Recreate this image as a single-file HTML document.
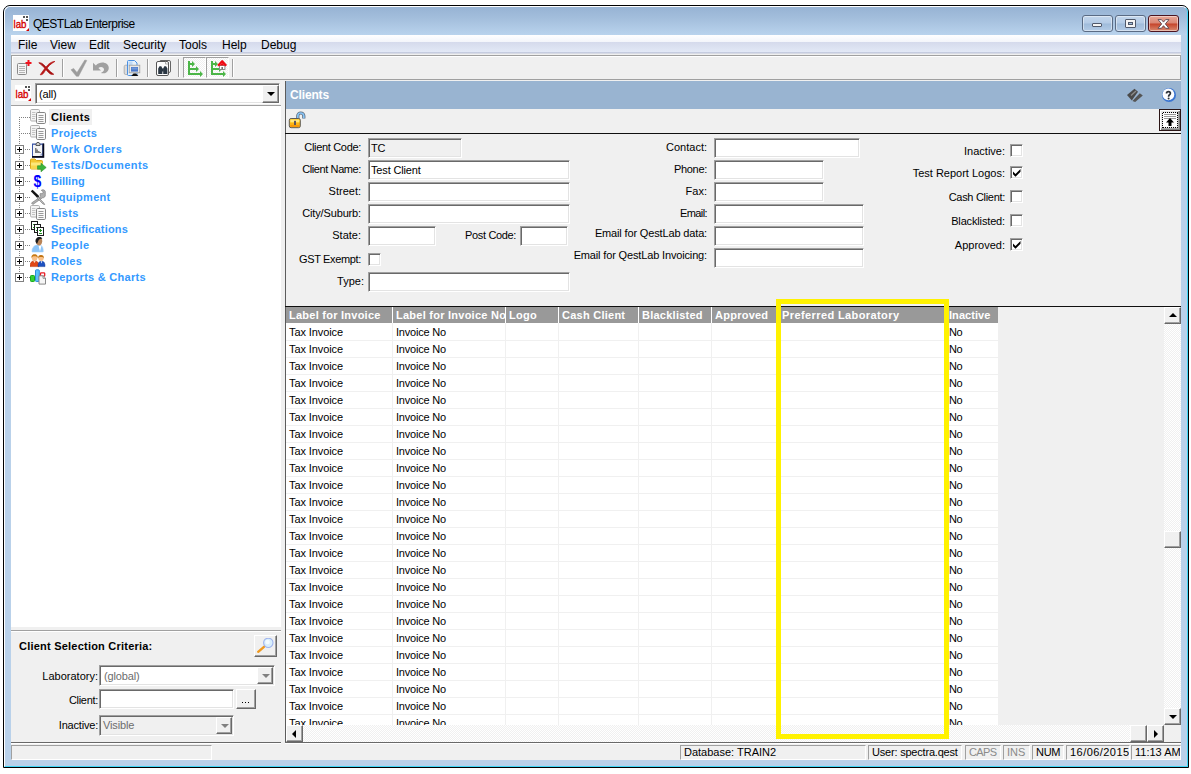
<!DOCTYPE html>
<html>
<head>
<meta charset="utf-8">
<title>QESTLab Enterprise</title>
<style>
*{box-sizing:border-box;margin:0;padding:0}
html,body{width:1191px;height:774px;overflow:hidden;background:#fff}
body{position:relative;font-family:"Liberation Sans",sans-serif;font-size:11px;color:#000}
.a{position:absolute}
#win{left:3px;top:5px;width:1186px;height:763px;background:#b9d1ea;border:1px solid #000;border-radius:7px 7px 0 0;overflow:hidden}
#win .cy{left:0;top:0;right:0;bottom:0;border:1px solid #3fd6f6;border-top-color:#fff;border-left-color:#fff;border-radius:6px 6px 0 0}
#tgrad{left:1px;top:1px;right:1px;height:28px;background:linear-gradient(#97b3d4,#a3bedc 40%,#b9d3ed)}
#client{left:11px;top:35px;width:1170px;height:725px;background:#f0f0f0}
#title{left:33px;top:16px;font-size:12px;line-height:16px;color:#000;white-space:nowrap;letter-spacing:-.5px}
.wb{top:15px;width:31px;height:17px;border:1px solid #5a6b84;border-radius:3px;background:linear-gradient(#c3d6ec 0,#b4cbe6 48%,#9fbbda 52%,#b3cbe6 100%);box-shadow:inset 0 0 0 1px rgba(255,255,255,.45)}
#menubar{left:11px;top:35px;width:1170px;height:19px;background:linear-gradient(#ffffff 0,#f3f5fb 36%,#d5daec 38%,#e2e8f6 88%,#b9c0d6 94%,#f0f0f0 100%)}
.mi{top:37px;font-size:12px;line-height:16px;white-space:nowrap}
#toolbar{left:11px;top:55px;width:1170px;height:25px;border:1px solid #a0a0a0;box-shadow:inset 1px 1px 0 #fff;background:#f0f0f0}
.sep{top:59px;width:2px;height:18px;border-left:1px solid #a0a0a0;border-right:1px solid #fff}
.lbl{white-space:nowrap;line-height:13px;font-size:11px;text-align:right}
.tb{background:#fff;border:1px solid;border-color:#a0a0a0 #fff #fff #a0a0a0;box-shadow:inset 1px 1px 0 #696969, inset -1px -1px 0 #e3e3e3;font-size:11px;line-height:14px;padding:2px 0 0 2px;white-space:nowrap;overflow:hidden;letter-spacing:-.15px}
.cb{width:13px;height:13px;background:#fff;border:1px solid;border-color:#a0a0a0 #fff #fff #a0a0a0;box-shadow:inset 1px 1px 0 #696969, inset -1px -1px 0 #e3e3e3}
.btn{background:#f0f0f0;border:1px solid;border-color:#fff #696969 #696969 #fff;box-shadow:inset -1px -1px 0 #a0a0a0, inset 1px 1px 0 #f0f0f0}
.dith{background-color:#f0f0f0;background-image:conic-gradient(#fff 25%,#f0f0f0 0 50%,#fff 0 75%,#f0f0f0 0);background-size:2px 2px}
.tr{left:51px;font-weight:bold;font-size:11px;line-height:13px;color:#3399ff;white-space:nowrap;letter-spacing:.45px;margin-top:1px}
.hd{top:307px;height:16px;background:#999;color:#fff;font-weight:bold;font-size:11px;line-height:17px;padding-left:3px;white-space:nowrap;overflow:hidden;letter-spacing:.25px}
.sbp{top:745px;height:15px;border:1px solid;border-color:#a0a0a0 #fff #fff #a0a0a0;font-size:11px;line-height:13px;padding-left:3px;white-space:nowrap;overflow:hidden}
.gt{font-size:11px;line-height:13px;white-space:nowrap}
</style>
</head>
<body>
<!-- window frame -->
<div id="win" class="a"><div id="tgrad" class="a"></div><div class="a cy"></div></div>
<div id="client" class="a"></div>
<!-- app icon -->
<svg class="a" style="left:13px;top:15px" width="16" height="16" viewBox="0 0 16 16"><rect width="16" height="16" fill="#fff"/><text x="0.500" y="12.500" font-family="Liberation Sans" font-size="11" fill="#d40000" stroke="#d40000" stroke-width=".35" textLength="13" lengthAdjust="spacingAndGlyphs">lab</text><rect x="10" y="1" width="2" height="2" fill="#555"/><rect x="13" y="1" width="2" height="2" fill="#555"/><rect x="13" y="4" width="2" height="2" fill="#555"/><path d="M16 13v3h-3z" fill="#d40000"/></svg>
<div id="title" class="a">QESTLab Enterprise</div>
<!-- caption buttons -->
<div class="a wb" style="left:1082px"><div class="a" style="left:9px;top:7px;width:10px;height:4px;background:#f4f4f4;border:1px solid #50596b;border-radius:1px"></div></div>
<div class="a wb" style="left:1115px"><div class="a" style="left:9px;top:3px;width:11px;height:9px;background:#f4f4f4;border:1px solid #50596b;border-radius:1px"><div class="a" style="left:2px;top:2px;width:5px;height:3px;background:#9fbbda;border:1px solid #50596b"></div></div></div>
<div class="a wb" style="left:1148px;border-color:#4b1420;background:linear-gradient(#e8a696 0,#d98573 48%,#c5432a 52%,#d98a6f 100%)"><svg class="a" style="left:8px;top:3px" width="13" height="10" viewBox="0 0 13 10"><path d="M1 .6h3.400L6.500 3.100 8.600 .6H12L8.300 4.900 12 9.300H8.600L6.500 6.700 4.400 9.300H1L4.700 4.900z" fill="#fff" stroke="#5a4650" stroke-width=".9"/></svg></div>
<!-- menu bar -->
<div id="menubar" class="a"></div>
<div class="a mi" style="left:18px">File</div>
<div class="a mi" style="left:50px">View</div>
<div class="a mi" style="left:89px">Edit</div>
<div class="a mi" style="left:123px">Security</div>
<div class="a mi" style="left:179px">Tools</div>
<div class="a mi" style="left:222px">Help</div>
<div class="a mi" style="left:261px">Debug</div>
<!-- toolbar -->
<div id="toolbar" class="a"></div>
<!-- toolbar icons -->
<svg class="a" style="left:16px;top:59px" width="18" height="18" viewBox="0 0 18 18"><rect x="1.5" y="4.500" width="9" height="11" rx="1" fill="#f4f4f4" stroke="#8a8a8a"/><path d="M3 7.500h6M3 9.500h6M3 11.500h6M3 13.500h6" stroke="#b4b4b4"/><path d="M12.500 1v6M9.500 4h6" stroke="#f0141e" stroke-width="2"/></svg>
<svg class="a" style="left:38px;top:60px" width="18" height="16" viewBox="0 0 18 16"><path d="M.8 2.800C2.500 2.500 4 3.200 5.500 4.600C8.500 7.500 11.500 11.500 15.800 14.300C13.500 14.800 12 14 10.500 12.500C7.500 9.500 5 5.500 .8 2.800z" fill="#a81010" stroke="#a81010" stroke-width=".7"/><path d="M17 1.400C14 1.600 11.500 3 9.500 5.300C7 8 4.500 11.500 2.200 14.800C3.800 14.900 4.800 14.200 5.700 13C8 9.500 11 4.500 17 1.400z" fill="#b81818" stroke="#b81818" stroke-width=".7"/></svg>
<div class="a sep" style="left:62px"></div>
<svg class="a" style="left:70px;top:59px" width="18" height="18" viewBox="0 0 18 18"><path d="M1 10.800L3.600 9.400L7 13.600L14.800 1L16.800 1.400L8.600 17.300H6.400z" fill="#9c9c9c" stroke="#9c9c9c" stroke-width=".5"/></svg>
<svg class="a" style="left:92px;top:60px" width="18" height="16" viewBox="0 0 18 16"><path d="M1 2.800V10.500H9L6.400 8C8.500 6.400 12 7 12 9.600C12 11 11 12 9.400 12.400V13.200H13C15.500 12.200 16.800 10.200 16.800 8C16.800 2.800 9 .2 3.800 5.400z" fill="#a0a0a0"/></svg>
<div class="a sep" style="left:116px"></div>
<svg class="a" style="left:123px;top:59px" width="18" height="18" viewBox="0 0 18 18"><rect x="1.200" y="6.200" width="5" height="9.300" rx="1.500" fill="#dcdcdc" stroke="#a4a4a4" stroke-width=".8"/><path d="M5.500 1.500h6l2.500 2.500v12.500h-8.500q-1 0-1-1v-13q0-1 1-1z" fill="#e6f1fc" stroke="#4a90e2"/><path d="M5.500 2.500h4v4.500h-4z" fill="#c0daf6"/><rect x="6.200" y="6.200" width="10.600" height="7.600" fill="#e8e8e8" stroke="#9c9c9c" stroke-width=".8"/><rect x="8" y="8" width="7" height="4.600" fill="#4a78c8"/><rect x="8.500" y="8.500" width="6" height="2" fill="#7098da"/><path d="M8.200 16.900l2.300-2.400h2.500l2.400 2.400z" fill="#111"/></svg>
<div class="a sep" style="left:147px"></div>
<svg class="a" style="left:155px;top:59px" width="18" height="18" viewBox="0 0 18 18"><rect x="4.500" y="1.500" width="11" height="12" rx="1.500" fill="#fafafa" stroke="#666"/><rect x="1.500" y="2.500" width="12" height="14" rx="1.500" fill="#fdfdfd" stroke="#555"/><path d="M10.500 2.500v2.500h3" fill="none" stroke="#999" stroke-width=".8"/><path d="M3.200 15v-5.500l1.300-2.200h1.800l1.100 2.200V15zM8.200 15v-5.500l1.100-2.200h1.800l1.300 2.200V15z" fill="#2a3642"/><rect x="7" y="9.500" width="1.700" height="3" fill="#2a3642"/></svg>
<div class="a sep" style="left:178px"></div>
<div class="a dith" style="left:183px;top:57px;width:23px;height:21px;border:1px solid;border-color:#a0a0a0 #fff #fff #a0a0a0"></div>
<div class="a dith" style="left:206px;top:57px;width:23px;height:21px;border:1px solid;border-color:#a0a0a0 #fff #fff #a0a0a0"></div>
<svg class="a" style="left:187px;top:60px" width="18" height="18" viewBox="0 0 18 18"><path d="M1 1h2v12h10v-2l3 3-3 3v-2H1zM3 3h2V1l3 3-3 3V5H3zM3 8h6V6l3 3-3 3v-2H3z" fill="#4cb648"/></svg>
<svg class="a" style="left:210px;top:60px" width="18" height="18" viewBox="0 0 18 18"><path d="M1 1h2v12h10v-2l3 3-3 3v-2H1zM3 3h2V1l3 3-3 3V5H3zM3 8h6V6l3 3-3 3v-2H3z" fill="#4cb648"/><rect x="9.500" y="5.500" width="5.400" height="4" fill="#fff" stroke="#8a8a8a"/><rect x="11.400" y="7" width="1.600" height="2.400" fill="#777"/><path d="M8 5.800L12.200 1.200 16.200 5.800" stroke="#f00a14" stroke-width="2.200" fill="none" stroke-linejoin="round"/><path d="M9.500 5.500l2.700-2.800 2.600 2.800z" fill="#f00a14"/></svg>
<div class="a sep" style="left:232px"></div>
<!-- left pane -->
<svg class="a" style="left:15px;top:85px" width="16" height="16" viewBox="0 0 16 16"><rect width="16" height="16" fill="#fff"/><text x="0.500" y="12.500" font-family="Liberation Sans" font-size="11" fill="#d40000" stroke="#d40000" stroke-width=".35" textLength="13" lengthAdjust="spacingAndGlyphs">lab</text><rect x="10" y="1" width="2" height="2" fill="#555"/><rect x="13" y="1" width="2" height="2" fill="#555"/><rect x="13" y="4" width="2" height="2" fill="#555"/><path d="M16 13v3h-3z" fill="#d40000"/></svg>
<div class="a tb" style="left:35px;top:83px;width:245px;height:21px;padding:3px 0 0 3px">(all)</div>
<div class="a btn" style="left:262px;top:85px;width:17px;height:18px"><div class="a" style="left:4px;top:6px;border:4px solid transparent;border-top:4px solid #000;border-bottom:0;width:0;height:0"></div></div>
<div class="a" style="left:11px;top:105px;width:270px;height:522px;background:#fff;border-top:1px solid #a0a0a0"></div>
<div class="a" style="left:19px;top:117px;width:1px;height:161px;background:repeating-linear-gradient(#808080 0 1px,transparent 1px 2px)"></div>
<div class="a" style="left:19px;top:117px;width:11px;height:1px;background:repeating-linear-gradient(90deg,#808080 0 1px,transparent 1px 2px)"></div>
<svg class="a" style="left:30px;top:109px" width="17" height="17" viewBox="0 0 17 17"><rect x=".5" y=".5" width="9" height="11.500" rx="1.200" fill="#f4f4f4" stroke="#b0b0b0"/><path d="M2 3.500h3.500M2 5.500h3.500M2 7.500h3.500M2 9.500h3" stroke="#c4c4c4"/><rect x="6.500" y="3.500" width="9" height="11" rx="1.200" fill="#fafafa" stroke="#858585"/><path d="M8.500 6.500h5M8.500 8.500h5M8.500 10.500h5M8.500 12.500h5" stroke="#9a9a9a"/></svg>
<div class="a" style="left:49px;top:109px;width:43px;height:16px;background:#f0f0f0"></div>
<div class="a tr" style="top:110px;color:#000;letter-spacing:0.35px">Clients</div>
<div class="a" style="left:19px;top:133px;width:11px;height:1px;background:repeating-linear-gradient(90deg,#808080 0 1px,transparent 1px 2px)"></div>
<svg class="a" style="left:30px;top:125px" width="17" height="17" viewBox="0 0 17 17"><rect x=".5" y=".5" width="9" height="11.500" rx="1.200" fill="#f4f4f4" stroke="#b0b0b0"/><path d="M2 3.500h3.500M2 5.500h3.500M2 7.500h3.500M2 9.500h3" stroke="#c4c4c4"/><rect x="6.500" y="3.500" width="9" height="11" rx="1.200" fill="#fafafa" stroke="#858585"/><path d="M8.500 6.500h5M8.500 8.500h5M8.500 10.500h5M8.500 12.500h5" stroke="#9a9a9a"/></svg>
<div class="a tr" style="top:126px;letter-spacing:0.35px">Projects</div>
<div class="a" style="left:25px;top:149px;width:5px;height:1px;background:repeating-linear-gradient(90deg,#808080 0 1px,transparent 1px 2px)"></div>
<div class="a" style="left:15px;top:145px;width:9px;height:9px;background:#fff;border:1px solid #808080"><div class="a" style="left:1px;top:3px;width:5px;height:1px;background:#000"></div><div class="a" style="left:3px;top:1px;width:1px;height:5px;background:#000"></div></div>
<svg class="a" style="left:30px;top:141px" width="17" height="17" viewBox="0 0 17 17"><rect x="2" y="2.500" width="12" height="14" fill="#3a55a8"/><rect x="3" y="3.800" width="9.200" height="11.200" fill="#f4f4f4"/><path d="M13.400 2.500V15.800H2" stroke="#080818" stroke-width="1.700" fill="none"/><path d="M12 14.500l-2.500 0 2.500-2.500z" fill="#9aa8d0"/><path d="M6 4.500V3l1-1.500h2L10 3v1.500z" fill="#cfcfcf" stroke="#3a3a3a" stroke-width=".8"/><path d="M5 12V7h1.500v1.500H8V10h1.500v1h1.500v1z" fill="#7c7c7c"/></svg>
<div class="a tr" style="top:142px;letter-spacing:0.45px">Work Orders</div>
<div class="a" style="left:25px;top:165px;width:5px;height:1px;background:repeating-linear-gradient(90deg,#808080 0 1px,transparent 1px 2px)"></div>
<div class="a" style="left:15px;top:161px;width:9px;height:9px;background:#fff;border:1px solid #808080"><div class="a" style="left:1px;top:3px;width:5px;height:1px;background:#000"></div><div class="a" style="left:3px;top:1px;width:1px;height:5px;background:#000"></div></div>
<svg class="a" style="left:30px;top:157px" width="17" height="17" viewBox="0 0 17 17"><path d="M.5 3q0-1 1-1h3.500l1.500 1.500h5q1 0 1 1V11q0 1-1 1h-10q-1 0-1-1z" fill="#f4c832" stroke="#dca81a"/><path d="M1 5.500h11.500v6H1z" fill="#fde87a"/><path d="M1 8.500h11.500v3H1z" fill="#f8d84c"/><path d="M7.500 8.800H11V6.200l5.200 4.300L11 14.800v-2.600H7.500z" fill="#3cb43c" stroke="#2a8e2a" stroke-width=".6"/></svg>
<div class="a tr" style="top:158px;letter-spacing:0.45px">Tests/Documents</div>
<div class="a" style="left:25px;top:181px;width:5px;height:1px;background:repeating-linear-gradient(90deg,#808080 0 1px,transparent 1px 2px)"></div>
<div class="a" style="left:15px;top:177px;width:9px;height:9px;background:#fff;border:1px solid #808080"><div class="a" style="left:1px;top:3px;width:5px;height:1px;background:#000"></div><div class="a" style="left:3px;top:1px;width:1px;height:5px;background:#000"></div></div>
<svg class="a" style="left:30px;top:173px" width="17" height="17" viewBox="0 0 17 17"><text x="3.600" y="11.800" transform="scale(1,1.200)" font-family="Liberation Sans" font-weight="bold" font-size="14" fill="#0000ff">$</text></svg>
<div class="a tr" style="top:174px;letter-spacing:0px">Billing</div>
<div class="a" style="left:25px;top:197px;width:5px;height:1px;background:repeating-linear-gradient(90deg,#808080 0 1px,transparent 1px 2px)"></div>
<div class="a" style="left:15px;top:193px;width:9px;height:9px;background:#fff;border:1px solid #808080"><div class="a" style="left:1px;top:3px;width:5px;height:1px;background:#000"></div><div class="a" style="left:3px;top:1px;width:1px;height:5px;background:#000"></div></div>
<svg class="a" style="left:30px;top:189px" width="17" height="17" viewBox="0 0 17 17"><path d="M15.300 2.500c-.3-1.500-2.500-2.300-4-1.200l2 1.600-.8 1.800-2.200-.2C9.700 6 10.200 7 11 7.500L1.500 14l1.300 1.500L12.500 8.800c1.800.2 3.200-1.500 2.800-3.300z" fill="#b0b0b0" stroke="#707070" stroke-width=".6"/><path d="M.8 2.300L2.600.8 9.400 7.300 7.600 9.200z" fill="#141414"/><path d="M8 7.800l5.800 6.200 .9 1.600-1.800-.7L7 8.800z" fill="#c4c4c4" stroke="#6c6c6c" stroke-width=".6"/></svg>
<div class="a tr" style="top:190px;letter-spacing:0.3px">Equipment</div>
<div class="a" style="left:25px;top:213px;width:5px;height:1px;background:repeating-linear-gradient(90deg,#808080 0 1px,transparent 1px 2px)"></div>
<div class="a" style="left:15px;top:209px;width:9px;height:9px;background:#fff;border:1px solid #808080"><div class="a" style="left:1px;top:3px;width:5px;height:1px;background:#000"></div><div class="a" style="left:3px;top:1px;width:1px;height:5px;background:#000"></div></div>
<svg class="a" style="left:30px;top:205px" width="17" height="17" viewBox="0 0 17 17"><rect x=".5" y=".5" width="9" height="11.500" rx="1.200" fill="#f4f4f4" stroke="#b0b0b0"/><path d="M2 3.500h3.500M2 5.500h3.500M2 7.500h3.500M2 9.500h3" stroke="#c4c4c4"/><rect x="6.500" y="3.500" width="9" height="11" rx="1.200" fill="#fafafa" stroke="#858585"/><path d="M8.500 6.500h5M8.500 8.500h5M8.500 10.500h5M8.500 12.500h5" stroke="#9a9a9a"/></svg>
<div class="a tr" style="top:206px;letter-spacing:0.45px">Lists</div>
<div class="a" style="left:25px;top:229px;width:5px;height:1px;background:repeating-linear-gradient(90deg,#808080 0 1px,transparent 1px 2px)"></div>
<div class="a" style="left:15px;top:225px;width:9px;height:9px;background:#fff;border:1px solid #808080"><div class="a" style="left:1px;top:3px;width:5px;height:1px;background:#000"></div><div class="a" style="left:3px;top:1px;width:1px;height:5px;background:#000"></div></div>
<svg class="a" style="left:30px;top:221px" width="17" height="17" viewBox="0 0 17 17"><g shape-rendering="crispEdges"><rect x="1.500" y=".5" width="6" height="8" fill="#fff" stroke="#1c1c1c"/><path d="M3 3.500h2M3 6.500h2" stroke="#2a9a2a"/><rect x="4.500" y="3.500" width="6" height="8" fill="#fff" stroke="#1c1c1c"/><path d="M6 6.500h2M6 9.500h2" stroke="#2a9a2a"/><rect x="7.500" y="6.500" width="6" height="8" fill="#fff" stroke="#1c1c1c"/><path d="M9 9.500h3M10.500 8v3M9 12.500h3" stroke="#1e8e1e"/></g></svg>
<div class="a tr" style="top:222px;letter-spacing:0.17px">Specifications</div>
<div class="a" style="left:25px;top:245px;width:5px;height:1px;background:repeating-linear-gradient(90deg,#808080 0 1px,transparent 1px 2px)"></div>
<div class="a" style="left:15px;top:241px;width:9px;height:9px;background:#fff;border:1px solid #808080"><div class="a" style="left:1px;top:3px;width:5px;height:1px;background:#000"></div><div class="a" style="left:3px;top:1px;width:1px;height:5px;background:#000"></div></div>
<svg class="a" style="left:30px;top:237px" width="17" height="17" viewBox="0 0 17 17"><path d="M2 15c-.3-3.500 1.500-6.500 5-7h3c2.500.5 3.500 3.500 3.200 7z" fill="#8cc4f8" stroke="#a8d4fa" stroke-width=".6"/><path d="M8.500 8.500l1.500 6 1.500-6z" fill="#fff"/><path d="M6 4.500C6 1.500 8 .3 9.500 .3 11.500 .3 12.300 2 12.200 4.500 12 7 10.500 8.500 9.300 8.500 7.500 8.500 6 7 6 4.500z" fill="#b88458"/><path d="M5.600 5C5 2 7 0 9.500 0c1.500 0 2.500.6 2.800 1.800-2-.3-3.200.4-3.800 1.800C8 5 7.500 6 7 7z" fill="#1c1c1c"/></svg>
<div class="a tr" style="top:238px;letter-spacing:0.4px">People</div>
<div class="a" style="left:25px;top:261px;width:5px;height:1px;background:repeating-linear-gradient(90deg,#808080 0 1px,transparent 1px 2px)"></div>
<div class="a" style="left:15px;top:257px;width:9px;height:9px;background:#fff;border:1px solid #808080"><div class="a" style="left:1px;top:3px;width:5px;height:1px;background:#000"></div><div class="a" style="left:3px;top:1px;width:1px;height:5px;background:#000"></div></div>
<svg class="a" style="left:30px;top:253px" width="17" height="17" viewBox="0 0 17 17"><path d="M0 13.600c-.2-3.500 1.500-5.800 4.500-5.800s4.700 2.300 4.500 5.800z" fill="#e04818" stroke="#b43408" stroke-width=".5"/><path d="M3.300 8l1.200 2 1.200-2z" fill="#f4e0d0"/><circle cx="4.600" cy="4.800" r="2.900" fill="#f8c088"/><path d="M1.500 5C1 2.500 2.500 1.200 4.600 1.200S8.200 2.500 7.700 5C7 3.500 6 3 4.600 3.200 3.200 3 2.200 3.500 1.500 5z" fill="#c87a14"/><path d="M8 13.600c-.2-3.200 1-5.600 3.500-5.600s3.700 2.400 3.500 5.600z" fill="#1c50c0" stroke="#103890" stroke-width=".5"/><path d="M10.600 8.200l.9 2.400.9-2.400z" fill="#e8f0ff"/><circle cx="11" cy="5.200" r="2.600" fill="#f8c088"/><path d="M8.200 5.500C7.800 3 9.200 2 11 2s3.200 1 2.800 3.500C13.200 4.200 12.300 3.800 11 4 9.700 3.800 8.800 4.200 8.200 5.500z" fill="#c07210"/></svg>
<div class="a tr" style="top:254px;letter-spacing:0.2px">Roles</div>
<div class="a" style="left:25px;top:277px;width:5px;height:1px;background:repeating-linear-gradient(90deg,#808080 0 1px,transparent 1px 2px)"></div>
<div class="a" style="left:15px;top:273px;width:9px;height:9px;background:#fff;border:1px solid #808080"><div class="a" style="left:1px;top:3px;width:5px;height:1px;background:#000"></div><div class="a" style="left:3px;top:1px;width:1px;height:5px;background:#000"></div></div>
<svg class="a" style="left:30px;top:269px" width="17" height="17" viewBox="0 0 17 17"><rect x=".5" y="6.500" width="4" height="6" rx=".8" fill="#34d034" stroke="#18a818"/><rect x="5.500" y=".8" width="3.800" height="11.700" rx=".8" fill="#5cc0fa" stroke="#2c8ce0"/><rect x="10.500" y="3.800" width="4.200" height="3.500" rx=".8" fill="#fff" stroke="#e81c24" stroke-width="1.300"/><path d="M9 6.800h4.200l2.300 2.300v6H9z" fill="#f6f6f6" stroke="#7c7c7c" stroke-width=".9"/><path d="M13 6.800v2.500h2.500" fill="none" stroke="#7c7c7c" stroke-width=".8"/></svg>
<div class="a tr" style="top:270px;letter-spacing:0.27px">Reports &amp; Charts</div>
<div class="a" style="left:11px;top:630px;width:270px;height:1px;background:#a0a0a0"></div>
<div class="a" style="left:11px;top:631px;width:270px;height:1px;background:#fff"></div>
<div class="a" style="left:19px;top:639px;font-weight:bold;font-size:11px;line-height:14px;white-space:nowrap;letter-spacing:.22px">Client Selection Criteria:</div>
<div class="a btn" style="left:254px;top:635px;width:23px;height:22px"><svg class="a" style="left:2px;top:2px" width="18" height="17" viewBox="0 0 18 17"><path d="M1.200 13.800L7 8.800" stroke="#f09a20" stroke-width="2.400" stroke-linecap="round"/><circle cx="11.300" cy="4.800" r="4.700" fill="#d8eefc" stroke="#9fb4ee" stroke-width="1.100"/><circle cx="10.600" cy="4" r="2.300" fill="#f4fbff"/></svg></div>
<div class="a lbl" style="left:20px;width:78px;top:670px">Laboratory:</div>
<div class="a tb" style="left:99px;top:665px;width:176px;height:21px;color:#6d6d6d;padding:3px 0 0 4px">(global)</div>
<div class="a btn" style="left:257px;top:667px;width:16px;height:17px"><div class="a" style="left:4px;top:6px;border:4px solid transparent;border-top:4px solid #808080;border-bottom:0;width:0;height:0"></div></div>
<div class="a lbl" style="left:20px;width:78px;top:694px;letter-spacing:-.3px">Client:</div>
<div class="a tb" style="left:99px;top:689px;width:135px;height:20px"></div>
<div class="a btn" style="left:236px;top:689px;width:20px;height:20px"><div class="a" style="left:5px;top:12px;width:1px;height:1px;background:#000;box-shadow:3px 0 0 #000,6px 0 0 #000"></div></div>
<div class="a lbl" style="left:20px;width:78px;top:719px;letter-spacing:-.2px">Inactive:</div>
<div class="a tb" style="left:99px;top:715px;width:135px;height:21px;background:#f0f0f0;color:#6d6d6d;padding:2px 0 0 3px">Visible</div>
<div class="a btn" style="left:216px;top:717px;width:16px;height:17px"><div class="a" style="left:4px;top:6px;border:4px solid transparent;border-top:4px solid #808080;border-bottom:0;width:0;height:0"></div></div>
<div class="a" style="left:11px;top:742px;width:270px;height:1px;background:#696969"></div>
<div class="a" style="left:11px;top:743px;width:270px;height:1px;background:#fff"></div>
<!-- right pane -->
<div class="a" style="left:285px;top:81px;width:1px;height:662px;background:#5c5c5c"></div>
<div class="a" style="left:286px;top:81px;width:895px;height:28px;background:#99b4d1"></div>
<div class="a" style="left:290px;top:87px;font-weight:bold;font-size:12px;line-height:16px;color:#fff;white-space:nowrap;letter-spacing:-.15px">Clients</div>
<svg class="a" style="left:1126px;top:88px" width="18" height="14" viewBox="0 0 18 14"><path d="M1 7L8.500 .8 12 3.800 5.800 12.400z" fill="#4a4a4a"/><path d="M5 7.600L10 3" stroke="#8c8c8c" stroke-width="1.300" fill="none"/><path d="M6.400 12.900L13.800 5.200 16.800 7.600 9.200 14z" fill="#555"/></svg>
<svg class="a" style="left:1161px;top:87px" width="16" height="16" viewBox="0 0 16 16"><circle cx="8" cy="8" r="7" fill="#3a74d0"/><circle cx="7.400" cy="7.400" r="5.900" fill="#fdfdff"/><path d="M5.500 6.600C5.500 5 6.400 4.600 7.500 4.600C8.700 4.600 9.400 5.300 9.400 6.300C9.400 7.300 8.700 7.700 8.100 8.200C7.700 8.600 7.600 9 7.600 9.800" stroke="#2c3038" stroke-width="1.700" fill="none"/><circle cx="7.600" cy="11.500" r="1" fill="#2c3038"/></svg>
<svg class="a" style="left:288px;top:111px" width="18" height="18" viewBox="0 0 18 18"><path d="M9.800 8.500V5a3 3 0 0 1 6 0V7.600" stroke="#5f6a78" stroke-width="3.200" fill="none"/><path d="M9.800 8.500V5a3 3 0 0 1 6 0V7.300" stroke="#86c4f6" stroke-width="1.700" fill="none"/><rect x="1.300" y="7.500" width="11" height="9.200" rx="1.800" fill="#fcb416" stroke="#5a5a5a" stroke-width="1"/><rect x="2" y="8.200" width="9.600" height="3.600" rx="1" fill="#ffd83c"/><rect x="2" y="14" width="9.600" height="2" rx="1" fill="#f59a0a"/><rect x="2.600" y="8.800" width="8.400" height="2.200" fill="#fff0a0" opacity=".7"/><rect x="6" y="9.800" width="2" height="4.200" fill="#5a5560"/></svg>
<div class="a" style="left:1159px;top:109px;width:22px;height:22px;background:#e8e8e8;border:1px solid #2a1414;box-shadow:inset 1px 1px 0 #fff,inset -1px -1px 0 #808080,inset -2px -2px 0 #a8a8a8"><svg class="a" style="left:2px;top:2px" width="16" height="16" viewBox="0 0 16 16" shape-rendering="crispEdges"><rect x="1" y="1" width="14" height="14" fill="#fff"/><path d="M.5 1v15M15.500 1v15" stroke="#000" stroke-dasharray="1 1"/><path d="M1 .5h15M1 15.500h15" stroke="#000" stroke-dasharray="1 1"/><path d="M2 2.500h12M2 4.500h12M2 6.500h12" stroke="#999"/><path d="M8 6l4 4.500H9.500V14h-3v-3.500H4z" fill="#000" shape-rendering="auto"/></svg></div>
<div class="a" style="left:285px;top:133px;width:896px;height:1px;background:#101010"></div>
<div class="a lbl" style="left:161px;width:200px;top:141px;letter-spacing:-0.32px">Client Code:</div>
<div class="a lbl" style="left:161px;width:200px;top:163px;letter-spacing:-0.4px">Client Name:</div>
<div class="a lbl" style="left:161px;width:200px;top:185px">Street:</div>
<div class="a lbl" style="left:161px;width:200px;top:207px;letter-spacing:-0.15px">City/Suburb:</div>
<div class="a lbl" style="left:161px;width:200px;top:229px">State:</div>
<div class="a lbl" style="left:161px;width:200px;top:253px;letter-spacing:-0.35px">GST Exempt:</div>
<div class="a lbl" style="left:164px;width:200px;top:275px">Type:</div>
<div class="a tb" style="left:368px;top:138px;width:94px;height:20px;background:#f0f0f0;">TC</div>
<div class="a tb" style="left:368px;top:160px;width:202px;height:20px;">Test Client</div>
<div class="a tb" style="left:368px;top:182px;width:202px;height:20px;"></div>
<div class="a tb" style="left:368px;top:204px;width:202px;height:20px;"></div>
<div class="a tb" style="left:368px;top:226px;width:68px;height:20px;"></div>
<div class="a lbl" style="left:316px;width:200px;top:229px;letter-spacing:-0.35px">Post Code:</div>
<div class="a tb" style="left:520px;top:226px;width:48px;height:20px;"></div>
<div class="a cb" style="left:368px;top:253px"></div>
<div class="a tb" style="left:368px;top:272px;width:202px;height:20px;"></div>
<div class="a lbl" style="left:507px;width:200px;top:141px">Contact:</div>
<div class="a tb" style="left:714px;top:138px;width:146px;height:20px;"></div>
<div class="a lbl" style="left:507px;width:200px;top:163px;letter-spacing:-0.3px">Phone:</div>
<div class="a tb" style="left:714px;top:160px;width:110px;height:20px;"></div>
<div class="a lbl" style="left:507px;width:200px;top:185px">Fax:</div>
<div class="a tb" style="left:714px;top:182px;width:110px;height:20px;"></div>
<div class="a lbl" style="left:507px;width:200px;top:207px;letter-spacing:-0.6px">Email:</div>
<div class="a tb" style="left:714px;top:204px;width:150px;height:20px;"></div>
<div class="a lbl" style="left:507px;width:200px;top:227px;letter-spacing:-0.15px">Email for QestLab data:</div>
<div class="a tb" style="left:714px;top:226px;width:150px;height:20px;"></div>
<div class="a lbl" style="left:507px;width:200px;top:249px;letter-spacing:-0.15px">Email for QestLab Invoicing:</div>
<div class="a tb" style="left:714px;top:248px;width:150px;height:20px;"></div>
<div class="a lbl" style="left:805px;width:200px;top:145px">Inactive:</div>
<div class="a cb" style="left:1010px;top:144px"></div>
<div class="a lbl" style="left:805px;width:200px;top:167px">Test Report Logos:</div>
<div class="a cb" style="left:1010px;top:166px"><svg class="a" style="left:2px;top:2px" width="8" height="8" viewBox="0 0 8 8"><path d="M0 2.500L2.500 5 7.500 0V2.800L2.500 7.800 0 5.300z" fill="#000"/></svg></div>
<div class="a lbl" style="left:805px;width:200px;top:191px;letter-spacing:-0.3px">Cash Client:</div>
<div class="a cb" style="left:1010px;top:190px"></div>
<div class="a lbl" style="left:805px;width:200px;top:215px;letter-spacing:-0.15px">Blacklisted:</div>
<div class="a cb" style="left:1010px;top:214px"></div>
<div class="a lbl" style="left:805px;width:200px;top:239px">Approved:</div>
<div class="a cb" style="left:1010px;top:238px"><svg class="a" style="left:2px;top:2px" width="8" height="8" viewBox="0 0 8 8"><path d="M0 2.500L2.500 5 7.500 0V2.800L2.500 7.800 0 5.300z" fill="#000"/></svg></div>
<!-- grid -->
<div class="a" style="left:285px;top:306px;width:896px;height:1px;background:#101010"></div>
<div class="a" style="left:286px;top:307px;width:878px;height:418px;background:#f0f0f0"></div>
<div class="a" style="left:286px;top:323px;width:712px;height:402px;background:#fff"></div>
<div class="a hd" style="left:286px;width:106px">Label for Invoice</div>
<div class="a" style="left:392px;top:307px;width:1px;height:16px;background:#fff"></div>
<div class="a" style="left:392px;top:323px;width:1px;height:402px;background:#f0f0f0"></div>
<div class="a hd" style="left:393px;width:112px">Label for Invoice No</div>
<div class="a" style="left:505px;top:307px;width:1px;height:16px;background:#fff"></div>
<div class="a" style="left:505px;top:323px;width:1px;height:402px;background:#f0f0f0"></div>
<div class="a hd" style="left:506px;width:52px">Logo</div>
<div class="a" style="left:558px;top:307px;width:1px;height:16px;background:#fff"></div>
<div class="a" style="left:558px;top:323px;width:1px;height:402px;background:#f0f0f0"></div>
<div class="a hd" style="left:559px;width:79px">Cash Client</div>
<div class="a" style="left:638px;top:307px;width:1px;height:16px;background:#fff"></div>
<div class="a" style="left:638px;top:323px;width:1px;height:402px;background:#f0f0f0"></div>
<div class="a hd" style="left:639px;width:72px">Blacklisted</div>
<div class="a" style="left:711px;top:307px;width:1px;height:16px;background:#fff"></div>
<div class="a" style="left:711px;top:323px;width:1px;height:402px;background:#f0f0f0"></div>
<div class="a hd" style="left:712px;width:66px">Approved</div>
<div class="a" style="left:778px;top:307px;width:1px;height:16px;background:#fff"></div>
<div class="a" style="left:778px;top:323px;width:1px;height:402px;background:#f0f0f0"></div>
<div class="a hd" style="left:779px;width:167px;letter-spacing:.4px">Preferred Laboratory</div>
<div class="a" style="left:946px;top:307px;width:1px;height:16px;background:#fff"></div>
<div class="a" style="left:946px;top:323px;width:1px;height:402px;background:#f0f0f0"></div>
<div class="a hd" style="left:947px;width:51px;letter-spacing:.05px;padding-left:2px">Inactive</div>
<div class="a" style="left:286px;top:340px;width:712px;height:1px;background:#f0f0f0"></div>
<div class="a" style="left:286px;top:357px;width:712px;height:1px;background:#f0f0f0"></div>
<div class="a" style="left:286px;top:374px;width:712px;height:1px;background:#f0f0f0"></div>
<div class="a" style="left:286px;top:391px;width:712px;height:1px;background:#f0f0f0"></div>
<div class="a" style="left:286px;top:408px;width:712px;height:1px;background:#f0f0f0"></div>
<div class="a" style="left:286px;top:425px;width:712px;height:1px;background:#f0f0f0"></div>
<div class="a" style="left:286px;top:442px;width:712px;height:1px;background:#f0f0f0"></div>
<div class="a" style="left:286px;top:459px;width:712px;height:1px;background:#f0f0f0"></div>
<div class="a" style="left:286px;top:476px;width:712px;height:1px;background:#f0f0f0"></div>
<div class="a" style="left:286px;top:493px;width:712px;height:1px;background:#f0f0f0"></div>
<div class="a" style="left:286px;top:510px;width:712px;height:1px;background:#f0f0f0"></div>
<div class="a" style="left:286px;top:527px;width:712px;height:1px;background:#f0f0f0"></div>
<div class="a" style="left:286px;top:544px;width:712px;height:1px;background:#f0f0f0"></div>
<div class="a" style="left:286px;top:561px;width:712px;height:1px;background:#f0f0f0"></div>
<div class="a" style="left:286px;top:578px;width:712px;height:1px;background:#f0f0f0"></div>
<div class="a" style="left:286px;top:595px;width:712px;height:1px;background:#f0f0f0"></div>
<div class="a" style="left:286px;top:612px;width:712px;height:1px;background:#f0f0f0"></div>
<div class="a" style="left:286px;top:629px;width:712px;height:1px;background:#f0f0f0"></div>
<div class="a" style="left:286px;top:646px;width:712px;height:1px;background:#f0f0f0"></div>
<div class="a" style="left:286px;top:663px;width:712px;height:1px;background:#f0f0f0"></div>
<div class="a" style="left:286px;top:680px;width:712px;height:1px;background:#f0f0f0"></div>
<div class="a" style="left:286px;top:697px;width:712px;height:1px;background:#f0f0f0"></div>
<div class="a" style="left:286px;top:714px;width:712px;height:1px;background:#f0f0f0"></div>
<div class="a" style="left:286px;top:323px;width:712px;height:402px;overflow:hidden">
<div class="a gt" style="left:3px;top:3px;letter-spacing:-.1px">Tax Invoice</div><div class="a gt" style="left:110px;top:3px;letter-spacing:-.2px">Invoice No</div><div class="a gt" style="left:663px;top:3px;letter-spacing:-.5px">No</div>
<div class="a gt" style="left:3px;top:20px;letter-spacing:-.1px">Tax Invoice</div><div class="a gt" style="left:110px;top:20px;letter-spacing:-.2px">Invoice No</div><div class="a gt" style="left:663px;top:20px;letter-spacing:-.5px">No</div>
<div class="a gt" style="left:3px;top:37px;letter-spacing:-.1px">Tax Invoice</div><div class="a gt" style="left:110px;top:37px;letter-spacing:-.2px">Invoice No</div><div class="a gt" style="left:663px;top:37px;letter-spacing:-.5px">No</div>
<div class="a gt" style="left:3px;top:54px;letter-spacing:-.1px">Tax Invoice</div><div class="a gt" style="left:110px;top:54px;letter-spacing:-.2px">Invoice No</div><div class="a gt" style="left:663px;top:54px;letter-spacing:-.5px">No</div>
<div class="a gt" style="left:3px;top:71px;letter-spacing:-.1px">Tax Invoice</div><div class="a gt" style="left:110px;top:71px;letter-spacing:-.2px">Invoice No</div><div class="a gt" style="left:663px;top:71px;letter-spacing:-.5px">No</div>
<div class="a gt" style="left:3px;top:88px;letter-spacing:-.1px">Tax Invoice</div><div class="a gt" style="left:110px;top:88px;letter-spacing:-.2px">Invoice No</div><div class="a gt" style="left:663px;top:88px;letter-spacing:-.5px">No</div>
<div class="a gt" style="left:3px;top:105px;letter-spacing:-.1px">Tax Invoice</div><div class="a gt" style="left:110px;top:105px;letter-spacing:-.2px">Invoice No</div><div class="a gt" style="left:663px;top:105px;letter-spacing:-.5px">No</div>
<div class="a gt" style="left:3px;top:122px;letter-spacing:-.1px">Tax Invoice</div><div class="a gt" style="left:110px;top:122px;letter-spacing:-.2px">Invoice No</div><div class="a gt" style="left:663px;top:122px;letter-spacing:-.5px">No</div>
<div class="a gt" style="left:3px;top:139px;letter-spacing:-.1px">Tax Invoice</div><div class="a gt" style="left:110px;top:139px;letter-spacing:-.2px">Invoice No</div><div class="a gt" style="left:663px;top:139px;letter-spacing:-.5px">No</div>
<div class="a gt" style="left:3px;top:156px;letter-spacing:-.1px">Tax Invoice</div><div class="a gt" style="left:110px;top:156px;letter-spacing:-.2px">Invoice No</div><div class="a gt" style="left:663px;top:156px;letter-spacing:-.5px">No</div>
<div class="a gt" style="left:3px;top:173px;letter-spacing:-.1px">Tax Invoice</div><div class="a gt" style="left:110px;top:173px;letter-spacing:-.2px">Invoice No</div><div class="a gt" style="left:663px;top:173px;letter-spacing:-.5px">No</div>
<div class="a gt" style="left:3px;top:190px;letter-spacing:-.1px">Tax Invoice</div><div class="a gt" style="left:110px;top:190px;letter-spacing:-.2px">Invoice No</div><div class="a gt" style="left:663px;top:190px;letter-spacing:-.5px">No</div>
<div class="a gt" style="left:3px;top:207px;letter-spacing:-.1px">Tax Invoice</div><div class="a gt" style="left:110px;top:207px;letter-spacing:-.2px">Invoice No</div><div class="a gt" style="left:663px;top:207px;letter-spacing:-.5px">No</div>
<div class="a gt" style="left:3px;top:224px;letter-spacing:-.1px">Tax Invoice</div><div class="a gt" style="left:110px;top:224px;letter-spacing:-.2px">Invoice No</div><div class="a gt" style="left:663px;top:224px;letter-spacing:-.5px">No</div>
<div class="a gt" style="left:3px;top:241px;letter-spacing:-.1px">Tax Invoice</div><div class="a gt" style="left:110px;top:241px;letter-spacing:-.2px">Invoice No</div><div class="a gt" style="left:663px;top:241px;letter-spacing:-.5px">No</div>
<div class="a gt" style="left:3px;top:258px;letter-spacing:-.1px">Tax Invoice</div><div class="a gt" style="left:110px;top:258px;letter-spacing:-.2px">Invoice No</div><div class="a gt" style="left:663px;top:258px;letter-spacing:-.5px">No</div>
<div class="a gt" style="left:3px;top:275px;letter-spacing:-.1px">Tax Invoice</div><div class="a gt" style="left:110px;top:275px;letter-spacing:-.2px">Invoice No</div><div class="a gt" style="left:663px;top:275px;letter-spacing:-.5px">No</div>
<div class="a gt" style="left:3px;top:292px;letter-spacing:-.1px">Tax Invoice</div><div class="a gt" style="left:110px;top:292px;letter-spacing:-.2px">Invoice No</div><div class="a gt" style="left:663px;top:292px;letter-spacing:-.5px">No</div>
<div class="a gt" style="left:3px;top:309px;letter-spacing:-.1px">Tax Invoice</div><div class="a gt" style="left:110px;top:309px;letter-spacing:-.2px">Invoice No</div><div class="a gt" style="left:663px;top:309px;letter-spacing:-.5px">No</div>
<div class="a gt" style="left:3px;top:326px;letter-spacing:-.1px">Tax Invoice</div><div class="a gt" style="left:110px;top:326px;letter-spacing:-.2px">Invoice No</div><div class="a gt" style="left:663px;top:326px;letter-spacing:-.5px">No</div>
<div class="a gt" style="left:3px;top:343px;letter-spacing:-.1px">Tax Invoice</div><div class="a gt" style="left:110px;top:343px;letter-spacing:-.2px">Invoice No</div><div class="a gt" style="left:663px;top:343px;letter-spacing:-.5px">No</div>
<div class="a gt" style="left:3px;top:360px;letter-spacing:-.1px">Tax Invoice</div><div class="a gt" style="left:110px;top:360px;letter-spacing:-.2px">Invoice No</div><div class="a gt" style="left:663px;top:360px;letter-spacing:-.5px">No</div>
<div class="a gt" style="left:3px;top:377px;letter-spacing:-.1px">Tax Invoice</div><div class="a gt" style="left:110px;top:377px;letter-spacing:-.2px">Invoice No</div><div class="a gt" style="left:663px;top:377px;letter-spacing:-.5px">No</div>
<div class="a gt" style="left:3px;top:394px;letter-spacing:-.1px">Tax Invoice</div><div class="a gt" style="left:110px;top:394px;letter-spacing:-.2px">Invoice No</div><div class="a gt" style="left:663px;top:394px;letter-spacing:-.5px">No</div>
</div>
<div class="a dith" style="left:1164px;top:307px;width:17px;height:418px"></div>
<div class="a btn" style="left:1164px;top:307px;width:17px;height:17px"><div class="a" style="left:4px;top:5px;border:4px solid transparent;border-bottom:4px solid #000;border-top:0;width:0;height:0"></div></div>
<div class="a btn" style="left:1164px;top:531px;width:17px;height:17px"></div>
<div class="a btn" style="left:1164px;top:708px;width:17px;height:17px"><div class="a" style="left:4px;top:6px;border:4px solid transparent;border-top:4px solid #000;border-bottom:0;width:0;height:0"></div></div>
<div class="a dith" style="left:286px;top:725px;width:878px;height:17px"></div>
<div class="a btn" style="left:286px;top:725px;width:17px;height:17px"><div class="a" style="left:5px;top:4px;border:4px solid transparent;border-right:4px solid #000;border-left:0;width:0;height:0"></div></div>
<div class="a btn" style="left:1130px;top:725px;width:17px;height:17px"></div>
<div class="a btn" style="left:1147px;top:725px;width:17px;height:17px"><div class="a" style="left:6px;top:4px;border:4px solid transparent;border-left:4px solid #000;border-right:0;width:0;height:0"></div></div>
<div class="a" style="left:1164px;top:725px;width:17px;height:17px;background:#f0f0f0"></div>
<div class="a" style="left:285px;top:742px;width:896px;height:1px;background:#696969"></div>
<div class="a" style="left:285px;top:743px;width:896px;height:1px;background:#fff"></div>
<div class="a" style="left:776px;top:299px;width:173px;height:440px;border:5px solid #fff200"></div>
<div class="a sbp" style="left:11px;width:201px;color:#000;letter-spacing:0px"></div>
<div class="a sbp" style="left:680px;width:186px;color:#000;letter-spacing:0px">Database: TRAIN2</div>
<div class="a sbp" style="left:868px;width:94px;color:#000;letter-spacing:-0.2px">User: spectra.qest</div>
<div class="a sbp" style="left:965px;width:36px;color:#8a8a8a;letter-spacing:-0.6px">CAPS</div>
<div class="a sbp" style="left:1003px;width:27px;color:#8a8a8a;letter-spacing:0px">INS</div>
<div class="a sbp" style="left:1032px;width:32px;color:#000;letter-spacing:-0.3px">NUM</div>
<div class="a sbp" style="left:1066px;width:64px;color:#000;letter-spacing:0.45px">16/06/2015</div>
<div class="a sbp" style="left:1131px;width:50px;color:#000;letter-spacing:0px">11:13 AM</div>
</body>
</html>
